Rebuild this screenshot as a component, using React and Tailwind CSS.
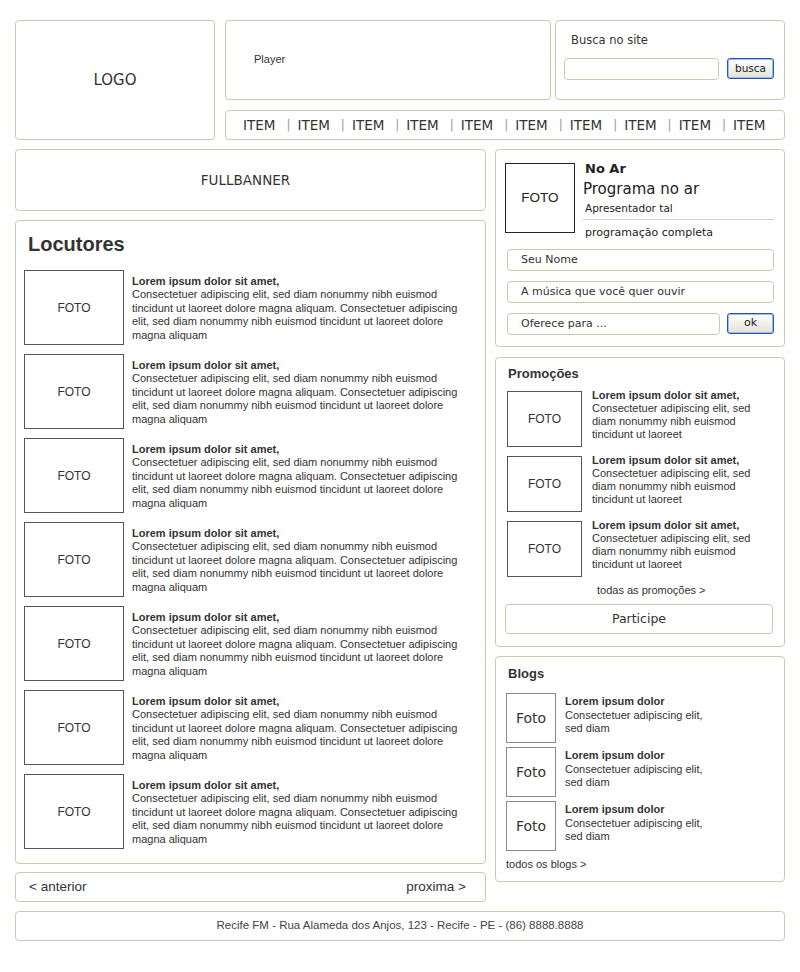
import React from 'react';

const box = "border border-[#cbc9b4] rounded-[4px] bg-white";
const verdana = { fontFamily: '"DejaVu Sans", Verdana, sans-serif' };
const arial = { fontFamily: '"Liberation Sans", Arial, sans-serif' };
const btn = "border border-[#1f58b8] rounded-[3px] bg-gradient-to-b from-white to-[#e4e2d8] shadow-[inset_0_0_0_1px_#9fbbe6] flex items-center justify-center text-[#222]";

const lorem = "Consectetuer adipiscing elit, sed diam nonummy nibh euismod tincidunt ut laoreet dolore magna aliquam. Consectetuer adipiscing elit, sed diam nonummy nibh euismod tincidunt ut laoreet dolore magna aliquam";

function Locutor() {
  return (
    <div className="flex gap-[8px] h-[75px]">
      <div className="w-[100px] h-[75px] shrink-0 border border-[#555] flex items-center justify-center text-[12px] text-[#333]">FOTO</div>
      <div className="pt-[5px] text-[11px] leading-[13.4px] text-[#333] w-[336px]">
        <div className="font-bold">Lorem ipsum dolor sit amet,</div>
        <div>{lorem}</div>
      </div>
    </div>
  );
}

function Promo() {
  return (
    <div className="flex gap-[10px] h-[56px]">
      <div className="w-[75px] h-[56px] shrink-0 border border-[#555] flex items-center justify-center text-[12px] text-[#333]">FOTO</div>
      <div className="-mt-[2px] text-[11px] leading-[13px] text-[#333] flex-1">
        <div className="font-bold">Lorem ipsum dolor sit amet,</div>
        <div>Consectetuer adipiscing elit, sed diam nonummy nibh euismod tincidunt ut laoreet</div>
      </div>
    </div>
  );
}

function Blog() {
  return (
    <div className="flex gap-[9px] h-[50px]">
      <div className="w-[50px] h-[50px] shrink-0 border border-[#8a8a8a] flex items-center justify-center text-[14px] text-[#333]" style={verdana}>Foto</div>
      <div className="pt-[2px] text-[11px] leading-[13.5px] text-[#333] w-[150px]">
        <div className="font-bold">Lorem ipsum dolor</div>
        <div>Consectetuer adipiscing elit, sed diam</div>
      </div>
    </div>
  );
}

export default function App() {
  const items = Array.from({ length: 10 });
  return (
    <div className="w-[800px] h-[972px] bg-white pt-[20px] pl-[15px]" style={arial}>
      <div className="w-[770px]">
        {/* header */}
        <div className="flex gap-[10px]">
          <div className={`${box} w-[200px] h-[120px] flex items-center justify-center text-[15px] text-[#333]`} style={verdana}>LOGO</div>
          <div className="w-[560px] flex flex-col gap-[10px]">
            <div className="flex gap-[4px] h-[80px]">
              <div className={`${box} w-[326px] pt-[31px] pl-[28px] text-[11px] leading-[14px] text-[#333]`}>Player</div>
              <div className={`${box} flex-1 pt-[12px] pl-[8px]`} style={verdana}>
                <div className="pl-[7px] text-[11.5px] leading-[14px] text-[#333]">Busca no site</div>
                <div className="flex gap-[8px] mt-[11px]">
                  <div className="w-[155px] h-[22px] border border-[#cbc9b4] rounded-[4px]"></div>
                  <div className={`${btn} w-[47px] h-[21px] text-[10.5px]`}>busca</div>
                </div>
              </div>
            </div>
            <div className={`${box} h-[30px] flex items-center pl-[17px] text-[13.5px] text-[#333]`} style={verdana}>
              {items.map((_, i) => (
                <React.Fragment key={i}>
                  {i > 0 && <span className="ml-[11px] mr-[7px] text-[#999] text-[12px]">|</span>}
                  <span>ITEM</span>
                </React.Fragment>
              ))}
            </div>
          </div>
        </div>

        {/* main */}
        <div className="flex gap-[9px] mt-[9px] items-start">
          <div className="w-[471px] flex flex-col">
            <div className={`${box} h-[62px] flex items-center justify-center text-[13.5px] text-[#333] pr-[10px]`} style={verdana}>FULLBANNER</div>
            <div className={`${box} h-[644px] mt-[9px] pt-[11px] pl-[8px]`}>
              <div className="pl-[4px] text-[20px] leading-[24px] font-bold text-[#333]">Locutores</div>
              <div className="mt-[14px] flex flex-col gap-[9px]">
                {Array.from({ length: 7 }).map((_, i) => <Locutor key={i} />)}
              </div>
            </div>
            <div className={`${box} h-[30px] mt-[8px] flex items-center justify-between pl-[13px] pr-[19px] text-[13.5px] text-[#333]`}>
              <span>&lt; anterior</span>
              <span>proxima &gt;</span>
            </div>
          </div>

          <div className="w-[290px] flex flex-col">
            {/* no ar */}
            <div className={`${box} h-[198px] pt-[13px] pl-[9px] pr-[10px]`} style={verdana}>
              <div className="flex gap-[8px]">
                <div className="w-[70px] h-[70px] shrink-0 border border-[#222] flex items-center justify-center text-[13.5px] text-[#222]" style={arial}>FOTO</div>
                <div className="flex-1 -mt-[2px] text-[#222]">
                  <div className="pl-[2px] text-[13px] leading-[16px] font-bold">No Ar</div>
                  <div className="text-[15px] leading-[25px]">Programa no ar</div>
                  <div className="pl-[2px] text-[10.5px] leading-[12px]">Apresentador tal</div>
                  <div className="mt-[5px] border-t border-[#cfcfcf]"></div>
                  <div className="pl-[2px] mt-[6px] text-[11px] leading-[14px]">programação completa</div>
                </div>
              </div>
              <div className="mt-[9px] pl-[2px] flex flex-col gap-[10px] text-[11px] text-[#333]">
                <div className="h-[22px] border border-[#cbc9b4] rounded-[4px] flex items-center pl-[13px]">Seu Nome</div>
                <div className="h-[22px] border border-[#cbc9b4] rounded-[4px] flex items-center pl-[13px]">A música que você quer ouvir</div>
                <div className="flex gap-[7px]">
                  <div className="w-[213px] h-[22px] border border-[#cbc9b4] rounded-[4px] flex items-center pl-[13px]">Oferece para ...</div>
                  <div className={`${btn} w-[47px] h-[21px] text-[11px]`}>ok</div>
                </div>
              </div>
            </div>

            {/* promocoes */}
            <div className={`${box} h-[290px] mt-[10px] pt-[8px] pl-[11px] pr-[11px]`}>
              <div className="pl-[1px] text-[13px] leading-[16px] font-bold text-[#333]">Promoções</div>
              <div className="mt-[9px] flex flex-col gap-[9px]">
                <Promo />
                <Promo />
                <Promo />
              </div>
              <div className="mt-[6px] pl-[90px] text-[11px] leading-[14px] text-[#333]">todas as promoções &gt;</div>
              <div className="mt-[7px] -ml-[2px] h-[30px] border border-[#cbc9b4] rounded-[4px] flex items-center justify-center text-[12.5px] text-[#333]" style={verdana}>Participe</div>
            </div>

            {/* blogs */}
            <div className={`${box} h-[226px] mt-[9px] pt-[9px] pl-[10px]`}>
              <div className="pl-[2px] text-[13px] leading-[16px] font-bold text-[#333]">Blogs</div>
              <div className="mt-[11px] flex flex-col gap-[4px]">
                <Blog />
                <Blog />
                <Blog />
              </div>
              <div className="mt-[6px] text-[11px] leading-[14px] text-[#333]">todos os blogs &gt;</div>
            </div>
          </div>
        </div>

        {/* footer */}
        <div className={`${box} h-[30px] mt-[9px] flex items-center justify-center text-[11.5px] text-[#444]`}>
          Recife FM - Rua Alameda dos Anjos, 123 - Recife - PE - (86) 8888.8888
        </div>
      </div>
    </div>
  );
}
